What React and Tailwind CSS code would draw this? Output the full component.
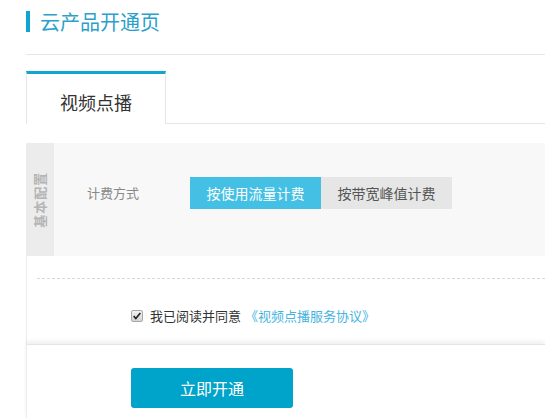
import React from 'react';

const font = { fontFamily: '"Noto Sans CJK SC", "Noto Sans", sans-serif' };

export default function App() {
  return (
    <div className="w-[545px] h-[418px] overflow-hidden bg-white pl-[26px] flex flex-col" style={font}>
      {/* page title */}
      <div className="h-[55px] border-b border-[#e6e6e6] flex items-start pt-[11px]">
        <div className="w-[4px] h-[21px] bg-[#0ea5cf]" />
        <div className="ml-[10px] text-[20px] leading-[21px] text-[#2c9fca]">云产品开通页</div>
      </div>

      {/* tabs */}
      <div className="mt-[16px] flex h-[53px]">
        <div className="w-[140px] border-t-[3px] border-t-[#10a6d0] border-x border-x-[#e6e6e6] bg-white flex justify-center pt-[16px]">
          <span className="text-[18px] leading-[24px] text-[#333]">视频点播</span>
        </div>
        <div className="flex-1 border-b border-[#e6e6e6]" />
      </div>

      {/* config block */}
      <div className="mt-[19px] h-[113px] flex bg-[#f8f8f8]">
        <div className="w-[28px] bg-[#ececec] flex items-center justify-center">
          <span className="-rotate-90 whitespace-nowrap text-[13px] font-bold text-[#b4b4b4] tracking-[1px]">基本配置</span>
        </div>
        <div className="flex-1 pl-[33px] pt-[34px]">
          <div className="flex items-center">
            <span className="w-[103px] text-[13px] text-[#888]">计费方式</span>
            <button className="w-[131px] h-[32px] bg-[#45c0e5] text-white text-[14px]">按使用流量计费</button>
            <button className="w-[131px] h-[32px] bg-[#e6e6e6] text-[#555] text-[14px]">按带宽峰值计费</button>
          </div>
        </div>
      </div>

      {/* agreement */}
      <div className="h-[88px] border-l border-[#ececec]">
        <div className="ml-[10px] mt-[22px] border-t border-dashed border-[#d9d9d9]" />
        <div className="ml-[104px] mt-[27px] flex items-center">
          <span className="w-[12px] h-[12px] rounded-[2px] border border-[#a8a8a8] bg-gradient-to-b from-[#f2f2f2] to-[#d4d4d4] flex items-center justify-center">
            <svg viewBox="0 0 12 12" className="w-[10px] h-[10px]">
              <path d="M2 6.2 L4.6 9 L10 2.5" fill="none" stroke="#222" strokeWidth="2" />
            </svg>
          </span>
          <span className="ml-[7px] text-[13px] text-[#333]">我已阅读并同意</span>
          <span className="ml-[4px] text-[13px] text-[#45b4e0]">《视频点播服务协议》</span>
        </div>
      </div>

      {/* footer */}
      <div className="flex-1 border-l border-[#ececec] border-t border-t-[#e6e6e6] shadow-[0_-3px_4px_rgba(0,0,0,0.06)] pl-[104px] pt-[23px]">
        <button className="w-[162px] h-[40px] rounded-[3px] bg-[#00a3c9] text-white text-[16px]">立即开通</button>
      </div>
    </div>
  );
}
